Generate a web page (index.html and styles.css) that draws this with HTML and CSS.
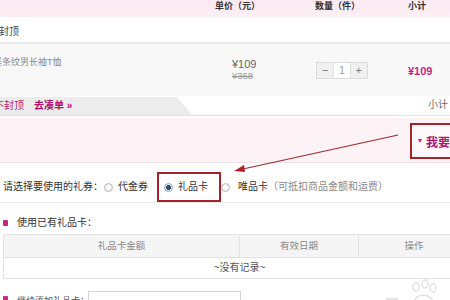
FILE: index.html
```html
<!DOCTYPE html>
<html lang="zh">
<head>
<meta charset="utf-8">
<link rel="stylesheet" href="styles.css">
</head>
<body>
<div class="page">
  <div class="thead">
    <span></span><span>单价（元）</span><span>数量（件）</span><span>小计</span>
  </div>
  <div class="cap"><span class="cut-a">封顶</span></div>
  <div class="product">
    <div class="pname">竖条纹男长袖T恤</div>
    <div class="price"><div class="now">¥109</div><div class="old">¥368</div></div>
    <div class="qty"><span class="q-btn">−</span><span class="q-num">1</span><span class="q-btn">+</span></div>
    <div class="sub">¥109</div>
  </div>
  <div class="tabbar">
    <div class="tab"><span class="cut-b">不封顶</span><span class="go">去凑单 »</span></div>
    <span class="sum">小计</span>
  </div>
  <div class="band">
    <div class="want"><span class="tri"></span><span>我要使用礼品卡</span></div>
  </div>
  <div class="choose">
    <span class="lbl">请选择要使用的礼券：</span>
    <span class="radio r1"></span>
    <span class="opt">代金券</span>
    <span class="hl"><span class="radio on"></span><span class="opt">礼品卡</span></span>
    <span class="radio r3"></span>
    <span class="opt dark">唯品卡</span><span class="note">（可抵扣商品金额和运费）</span>
  </div>
  <div class="sec"><span class="dot"></span><span>使用已有礼品卡：</span></div>
  <table class="cards">
    <tr class="th"><td class="c1">礼品卡金额</td><td class="c2">有效日期</td><td class="c3">操作</td></tr>
    <tr class="tb"><td colspan="3">~没有记录~</td></tr>
  </table>
  <div class="add"><span class="dot"></span><span class="addt">继续添加礼品卡：</span><span class="inp"></span></div>

  <svg class="arrow" width="450" height="300" viewBox="0 0 450 300">
    <line x1="398" y1="135" x2="243" y2="169" stroke="#9e2a30" stroke-width="1.2"/>
    <polygon points="234,171 244,165 245,172" fill="#b0222c"/>
  </svg>
  <svg class="mark" width="60" height="26" viewBox="0 0 60 26">
    <line x1="2" y1="21" x2="14" y2="21" stroke="#e4e4e4" stroke-width="2"/>
    <g fill="none" stroke="#e2e2e2" stroke-width="1.4">
      <ellipse cx="32" cy="9" rx="3" ry="4"/>
      <ellipse cx="41" cy="6" rx="3" ry="4"/>
      <ellipse cx="49" cy="10" rx="3" ry="4"/>
      <path d="M30 24 C32 16 44 14 50 24"/>
    </g>
  </svg>
</div>
</body>
</html>
```
FILE: styles.css
```css
html, body { margin: 0; padding: 0; }
body {
  width: 450px;
  height: 300px;
  overflow: hidden;
  background: #fff;
  font-family: "Liberation Sans", "Noto Sans CJK SC", sans-serif;
  color: #333;
}
.page { position: relative; width: 450px; height: 300px; overflow: hidden; }

.thead {
  height: 17px;
  background: linear-gradient(#fce9f1, #fdf0f5);
  display: grid;
  grid-template-columns: 215px 100px 93px 1fr;
  font-size: 9px;
  font-weight: bold;
  line-height: 12px;
  color: #333;
}
.cap {
  height: 25px;
  border-bottom: 2px solid #e8e8e8;
  display: flex;
  align-items: flex-end;
  font-size: 10px;
  line-height: 14px;
  color: #444;
}
.cap .cut-a { margin-left: -1px; margin-bottom: 3px; }

.product {
  height: 52px;
  background: #f8f8f8;
  display: grid;
  grid-template-columns: 232px 84px 92px 1fr;
  align-items: start;
}
.pname { margin: 12px 0 0 -7px; font-size: 9px; line-height: 12px; color: #8a8a8a; white-space: nowrap; }
.price { margin-top: 14px; }
.now { font-size: 11px; line-height: 12px; color: #666; }
.old { font-size: 9.5px; line-height: 12px; color: #999; text-decoration: line-through; }
.qty {
  margin-top: 18px;
  width: 50px;
  height: 15px;
  border: 1px solid #dcdcdc;
  display: flex;
  font-size: 10px;
  line-height: 15px;
  color: #777;
  background: #fff;
}
.q-btn { width: 17px; text-align: center; background: #f0f0f0; font-size: 11px; }
.q-num { width: 16px; text-align: center; border-left: 1px solid #e2e2e2; border-right: 1px solid #e2e2e2; background: #fff; color: #999; }
.sub { margin-top: 21px; font-size: 11px; line-height: 12px; font-weight: bold; color: #c21f86; }

.tabbar {
  height: 19px;
  border-bottom: 1px solid #e2e2e2;
  display: flex;
  align-items: flex-end;
  justify-content: space-between;
}
.tab {
  width: 192px;
  height: 18px;
  background: #ececec;
  clip-path: polygon(0 0, 177px 0, 100% 100%, 0 100%);
  display: flex;
  align-items: center;
  font-size: 10px;
  line-height: 14px;
}
.cut-b { margin-left: -6px; color: #b21a74; }
.go { margin-left: 10px; color: #b0136f; font-weight: bold; }
.sum { align-self: flex-start; margin-top: 2px; margin-right: 2px; font-size: 10px; line-height: 14px; color: #666; }

.band {
  margin-top: 2px;
  height: 44px;
  background: #fdf2f6;
  border-bottom: 1px solid #ece2e6;
  display: flex;
  align-items: flex-start;
}
.want {
  margin: 5px 0 0 410px;
  width: 100px;
  height: 32px;
  flex: none;
  border: 2px solid #a1232c;
  background: #fff9fb;
  display: flex;
  align-items: center;
  font-size: 12px;
  font-weight: bold;
  color: #b0136f;
  white-space: nowrap;
}
.tri {
  width: 0; height: 0;
  margin: 0 4px 0 6px;
  border-left: 2.5px solid transparent;
  border-right: 2.5px solid transparent;
  border-top: 4px solid #c0296f;
}

.choose {
  margin-top: 9px;
  height: 30px;
  border-bottom: 1px solid #ececec;
  display: flex;
  align-items: center;
  font-size: 10px;
  line-height: 14px;
  color: #333;
  white-space: nowrap;
}
.lbl { margin-left: 3px; width: 100px; }
.radio {
  width: 7px; height: 7px;
  border: 1px solid #b9b9b9;
  border-radius: 50%;
  background: radial-gradient(circle, #fafafa 30%, #e6e6e6 100%);
  flex: none;
}
.radio.on { background: radial-gradient(circle, #2f4d72 0 45%, #e8eef4 55% 100%); border-color: #9aa7b5; margin-left: 5px; }
.r1 { margin-left: 1px; }
.opt { margin-left: 5px; }
.hl {
  margin-left: 9px;
  align-self: stretch;
  border: 2px solid #a1232c;
  padding-right: 11px;
  display: flex;
  align-items: center;
}
.r3 { margin-left: 0; }
.opt.dark { margin-left: 8px; color: #333; }
.note { color: #888; }

.sec {
  margin-top: 13px;
  height: 14px;
  display: flex;
  align-items: center;
  font-size: 10px;
  line-height: 14px;
  color: #333;
}
.dot { width: 5px; height: 6px; background: #c4287f; margin: 0 9px 0 3px; border-radius: 1px; flex: none; }

.cards {
  margin: 4px 0 0 3px;
  width: 467px;
  border-collapse: collapse;
  font-size: 9.5px;
  line-height: 12px;
}
.cards td { border: 1px solid #e3e3e3; text-align: center; padding: 0; }
.th td { height: 22px; background: #f5f5f5; color: #888; }
.c1 { width: 235px; }
.c2 { width: 118px; }
.tb td { height: 20px; color: #555; font-size: 10px; padding-left: 6px; }

.add {
  margin-top: 12px;
  height: 22px;
  display: flex;
  align-items: flex-start;
  font-size: 9px;
  line-height: 12px;
  color: #555;
}
.add .dot { margin-top: 5px; }
.addt { width: 71px; margin-top: 4px; white-space: nowrap; }
.inp { width: 151px; height: 21px; border: 1px solid #d4d4d4; background: #fff; margin-left: 0; }

.arrow { position: absolute; left: 0; top: 0; pointer-events: none; }
.mark { position: absolute; left: 384px; top: 278px; }
```
